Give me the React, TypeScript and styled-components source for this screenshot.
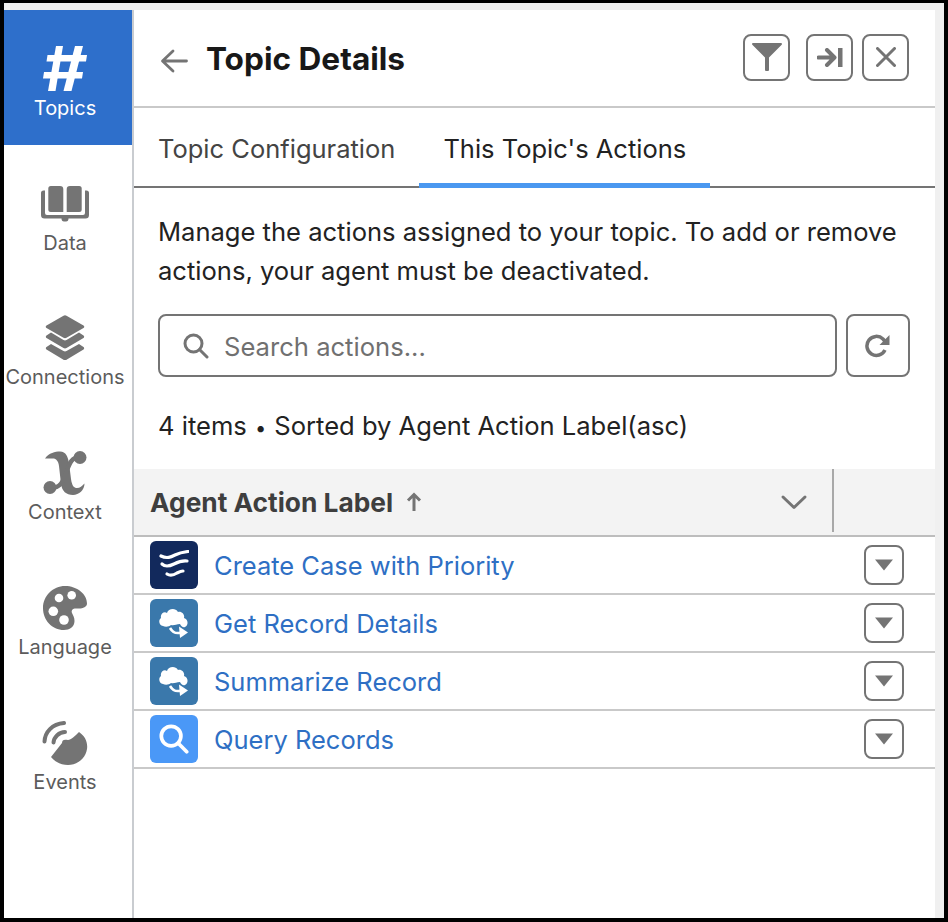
import React from 'react';
import styled, { createGlobalStyle } from 'styled-components';

const GlobalStyle = createGlobalStyle`
    html, body {
        margin: 0;
        padding: 0;
        background: #000;
    }
    * {
        box-sizing: border-box;
    }
`;

const ICON_GRAY = '#747474';
const LINK_BLUE = '#2e6fc4';

interface NavItemData {
    label: string;
    icon: JSX.Element;
}

const HashIcon = () => (
    <svg width="44" height="45" viewBox="0 0 44 45">
        <path d="M13 0 H20 L12.500 45 H5 Z" fill="#fff" />
        <path d="M32 0 H40 L28.500 45 H20.500 Z" fill="#fff" />
        <path d="M4.500 9 H44 L43 15.500 H3.500 Z" fill="#fff" />
        <path d="M1 26 H40 L39 32.500 H0 Z" fill="#fff" />
    </svg>
);

const BookIcon = () => (
    <svg width="48" height="40" viewBox="0 0 48 40" fill={ICON_GRAY}>
        <path d="M7.300 2.500 a2.500 2.500 0 0 1 2.500 -2.500 H19 a3.300 3.300 0 0 1 3.300 3.300 V26 H9.800 A2.500 2.500 0 0 1 7.300 23.500 Z" />
        <path d="M25.700 3.300 a3.300 3.300 0 0 1 3.300 -3.300 h9.200 a2.500 2.500 0 0 1 2.500 2.500 v21 a2.500 2.500 0 0 1 -2.500 2.500 H25.700 Z" />
        <path d="M0 7 a2.500 2.500 0 0 1 2.500 -2.500 H4 V27 a2 2 0 0 0 2 2 H42 a2 2 0 0 0 2 -2 V4.500 h1.500 A2.500 2.500 0 0 1 48 7 V29 a3.500 3.500 0 0 1 -3.500 3.500 H27.500 a2.500 3 0 0 1 -2.500 3 H23 a2.500 3 0 0 1 -2.500 -3 H3.500 A3.500 3.500 0 0 1 0 29 Z" />
    </svg>
);

const LayersIcon = () => (
    <svg width="40" height="45" viewBox="0 0 40 45" fill={ICON_GRAY}>
        <path d="M18.500 .7 a3 3 0 0 1 3 0 L38.500 10.500 a1.500 1.500 0 0 1 0 2.600 L21.500 22.800 a3 3 0 0 1 -3 0 L1.500 13.100 a1.500 1.500 0 0 1 0 -2.600 Z" />
        <path d="M6 17.500 L18.500 25 a3 3 0 0 0 3 0 L34 17.500 L38.500 20.500 a1.500 1.500 0 0 1 0 2.500 L21.500 33 a3 3 0 0 1 -3 0 L1.500 23 a1.500 1.500 0 0 1 0 -2.500 Z" />
        <path d="M6 29 L18.500 36 a3 3 0 0 0 3 0 L34 29 L38.500 32 a1.500 1.500 0 0 1 0 2.500 L21.500 44.800 a3 3 0 0 1 -3 0 L1.500 34.500 a1.500 1.500 0 0 1 0 -2.500 Z" />
    </svg>
);

const ContextIcon = () => (
    <svg width="44" height="44" viewBox="0 0 44 44" fill={ICON_GRAY}>
        <path d="M2 7.500 C6 2 12 .5 17 .5 C23 .5 25 6 26 12 L28 28 C29 35 31 37 34 37 C37 37 39 35 41.500 32.500 C41.500 39 36 44 30 44 C23 44 19 40 18 33 L16 15 C15.500 10 13 7.500 10 7.500 C7 7.500 4 7.500 2 7.500 Z" />
        <path d="M37 6 C28 6 26 14 23 22 C20 31 17 37 8 37" fill="none" stroke={ICON_GRAY} strokeWidth="4.500" />
        <circle cx="37" cy="6.500" r="6.500" />
        <circle cx="7" cy="36.500" r="6.500" />
    </svg>
);

const PaletteIcon = () => (
    <svg width="44" height="44" viewBox="0 0 44 44">
        <path
            fill={ICON_GRAY}
            d="M22 0 C34 0 44 8 44 17.500 C44 21 40 22.500 36 22.500 H33 C29.500 22.500 28 24.500 29 27 C30 29.500 31.500 31 31.500 35 C31.500 41 26.500 44 21 44 C9 44 0 34 0 22 C0 10 10 0 22 0 Z"
        />
        <circle cx="16" cy="12" r="4.300" fill="#fff" />
        <circle cx="28.700" cy="9.300" r="4.300" fill="#fff" />
        <circle cx="10.300" cy="25.300" r="4.800" fill="#fff" />
        <circle cx="21" cy="34" r="4.800" fill="#fff" />
    </svg>
);

const EventsIcon = () => (
    <svg width="46" height="44" viewBox="0 0 46 44" fill="none">
        <path
            fill={ICON_GRAY}
            d="M37 11 C43 15 46 21 45 28 C43.500 38 35 44 26 44 C19 44 13 41 9 36 L20 22 C20 19 22 18 26 19 C29 19 33 15 37 11 Z"
        />
        <path d="M2.500 20.500 C3 11 10 3 22 2" stroke={ICON_GRAY} strokeWidth="4" strokeLinecap="round" />
        <path d="M11.500 21.500 C12 16 17 11 23 11" stroke={ICON_GRAY} strokeWidth="4" strokeLinecap="round" />
    </svg>
);

const NAV_ITEMS: NavItemData[] = [
    { label: 'Topics', icon: <HashIcon /> },
    { label: 'Data', icon: <BookIcon /> },
    { label: 'Connections', icon: <LayersIcon /> },
    { label: 'Context', icon: <ContextIcon /> },
    { label: 'Language', icon: <PaletteIcon /> },
    { label: 'Events', icon: <EventsIcon /> },
];

const FilterIcon = () => (
    <svg width="30" height="28" viewBox="0 0 30 28" fill={ICON_GRAY}>
        <path d="M1 0 H29 a1 1 0 0 1 .7 1.700 L17 14.500 V27 a1 1 0 0 1 -1 1 H14 a1 1 0 0 1 -1 -1 V14.500 L.3 1.700 A1 1 0 0 1 1 0 Z" />
    </svg>
);

const CollapseIcon = () => (
    <svg width="26" height="19" viewBox="0 0 26 19" fill="none">
        <rect x="21" y="0" width="4.500" height="19" fill={ICON_GRAY} />
        <path d="M1.500 9.500 H17 M10 2 L17.500 9.500 L10 17" stroke={ICON_GRAY} strokeWidth="4" strokeLinecap="round" strokeLinejoin="round" />
    </svg>
);

const CloseIcon = () => (
    <svg width="20" height="20" viewBox="0 0 20 20" fill="none">
        <path d="M1.500 1.500 L18.500 18.500 M18.500 1.500 L1.500 18.500" stroke={ICON_GRAY} strokeWidth="3" strokeLinecap="round" />
    </svg>
);

const BackIcon = () => (
    <svg width="28" height="24" viewBox="0 0 28 24" fill="none">
        <path d="M3 12 H26.500 M13 2 L2.500 12 L13 22" stroke={ICON_GRAY} strokeWidth="2.800" strokeLinecap="round" strokeLinejoin="round" />
    </svg>
);

const SearchGlass = ({ color, size, width }: { color: string; size: number; width: number }) => (
    <svg width={size} height={size} viewBox="0 0 26 26" fill="none">
        <circle cx="10.500" cy="10.500" r="8.500" stroke={color} strokeWidth={width} />
        <path d="M16.500 16.500 L24 24" stroke={color} strokeWidth={width} strokeLinecap="round" />
    </svg>
);

const RefreshIcon = () => (
    <svg width="26" height="24" viewBox="0 0 26 24" fill="none">
        <path d="M20 16 A9.500 9.500 0 1 1 18 5 L21 8.500" stroke={ICON_GRAY} strokeWidth="3.500" />
        <path d="M24.500 1 V11 H14.500 Z" fill={ICON_GRAY} />
    </svg>
);

const FlowIcon = () => (
    <svg width="30" height="30" viewBox="0 0 30 30" fill="none" stroke="#fff" strokeWidth="3.200" strokeLinecap="round">
        <path d="M2 6 C8 9 12 7 16 5 C20 3 25 2 29 1.500" />
        <path d="M3 14 C6 17 11 16 15 14 C19 12 24 10.500 28 11" />
        <path d="M8 24 C11 26 15 25 18 23 C20 22 22 21 24 21" />
    </svg>
);

const CloudFlowIcon = () => (
    <svg width="32" height="30" viewBox="0 0 32 30" fill="none">
        <path
            fill="#fff"
            d="M5 18 C1 18 0 12 3 10 C2 6 6 3 9 5 C10 1 17 -1 20 4 C24 3 27 7 26 10 C30 11 31 17 27 19 C25 20 23 18 22 16 C18 16 16 18 13 17 C11 19 7 19 5 18 Z"
        />
        <path d="M12 20 C15 25 18 26 23 24.500" stroke="#fff" strokeWidth="2.600" fill="none" />
        <path d="M21 18.500 L30 24.500 L22 30 Z" fill="#fff" />
    </svg>
);

interface RowData {
    label: string;
    color: string;
    icon: JSX.Element;
}

const ROWS: RowData[] = [
    { label: 'Create Case with Priority', color: '#12295c', icon: <FlowIcon /> },
    { label: 'Get Record Details', color: '#3a78ab', icon: <CloudFlowIcon /> },
    { label: 'Summarize Record', color: '#3a78ab', icon: <CloudFlowIcon /> },
    { label: 'Query Records', color: '#4a98f7', icon: <SearchGlass color="#fff" size={30} width={3.2} /> },
];

export default function App() {
    return (
        <>
            <GlobalStyle />
            <Frame>
                <Window>
                    <Sidebar>
                        {NAV_ITEMS.map((item, i) => (
                            <NavItem key={item.label} active={i === 0}>
                                <NavIcon>{item.icon}</NavIcon>
                                <NavLabel>{item.label}</NavLabel>
                            </NavItem>
                        ))}
                    </Sidebar>
                    <Panel>
                        <Header>
                            <BackButton>
                                <BackIcon />
                            </BackButton>
                            <Title>Topic Details</Title>
                            <HeaderActions>
                                <SquareButton gap={0}>
                                    <FilterIcon />
                                </SquareButton>
                                <SquareButton gap={16}>
                                    <CollapseIcon />
                                </SquareButton>
                                <SquareButton gap={9}>
                                    <CloseIcon />
                                </SquareButton>
                            </HeaderActions>
                        </Header>
                        <Tabs>
                            <Tab>Topic Configuration</Tab>
                            <Tab active>This Topic's Actions</Tab>
                        </Tabs>
                        <Body>
                            <Description>
                                Manage the actions assigned to your topic. To add or remove actions, your agent must be
                                deactivated.
                            </Description>
                            <SearchRow>
                                <SearchBox>
                                    <SearchGlass color={ICON_GRAY} size={26} width={3} />
                                    <SearchText>Search actions...</SearchText>
                                </SearchBox>
                                <RefreshButton>
                                    <RefreshIcon />
                                </RefreshButton>
                            </SearchRow>
                            <Summary>
                                4 items <Dot>•</Dot> Sorted by Agent Action Label(asc)
                            </Summary>
                        </Body>
                        <TableHead>
                            <HeadLabel>
                                Agent Action Label
                                <svg width="16" height="20" viewBox="0 0 16 20" fill="none">
                                    <path d="M8 19 V3 M2 8.500 L8 2.500 L14 8.500" stroke={ICON_GRAY} strokeWidth="3" />
                                </svg>
                            </HeadLabel>
                            <svg width="28" height="16" viewBox="0 0 28 16" fill="none">
                                <path d="M3 3 L14 13.500 L25 3" stroke={ICON_GRAY} strokeWidth="3" strokeLinecap="round" strokeLinejoin="round" />
                            </svg>
                            <HeadDivider />
                        </TableHead>
                        {ROWS.map((row) => (
                            <Row key={row.label}>
                                <RowIcon color={row.color}>{row.icon}</RowIcon>
                                <RowLink>{row.label}</RowLink>
                                <RowMenu>
                                    <svg width="18" height="12" viewBox="0 0 18 12">
                                        <path d="M0 .5 H18 L9 11.500 Z" fill={ICON_GRAY} />
                                    </svg>
                                </RowMenu>
                            </Row>
                        ))}
                    </Panel>
                </Window>
            </Frame>
        </>
    );
}

const Frame = styled.div`
    width: 948px;
    height: 922px;
    padding: 3px 4px 4px 4px;
    background: #000;
    font-family: Inter, 'Liberation Sans', sans-serif;
`;

const Window = styled.div`
    width: 100%;
    height: 100%;
    padding: 7px 9px 0 0;
    background: #f0f0f0;
    display: flex;
`;

const Sidebar = styled.nav`
    width: 130px;
    flex: none;
    border-right: 2px solid #c9ccd0;
    background: #fff;
`;

const NavItem = styled.div<{ active?: boolean }>`
    height: 134.8px;
    display: flex;
    flex-direction: column;
    align-items: center;
    justify-content: flex-end;
    padding: 0 6px 25px 0;
    color: ${(props) => (props.active ? '#fff' : '#5c5c5c')};
    background: ${(props) => (props.active ? '#2e6fcb' : 'transparent')};
`;

const NavIcon = styled.div`
    height: 50px;
    display: flex;
    align-items: flex-end;
    justify-content: center;
    margin-bottom: 5px;
`;

const NavLabel = styled.span`
    font-size: 20px;
    line-height: 24px;
    white-space: nowrap;
`;

const Panel = styled.main`
    flex: 1;
    min-width: 0;
    background: #fff;
`;

const Header = styled.header`
    height: 98px;
    border-bottom: 2px solid #c9c9c9;
    display: flex;
    align-items: center;
    padding: 0 26px 0 26px;
`;

const BackButton = styled.div`
    display: flex;
    margin-top: 6px;
`;

const Title = styled.h1`
    margin: 1px 0 0 18px;
    font-size: 31.6px;
    line-height: 40px;
    font-weight: 700;
    color: #181818;
`;

const HeaderActions = styled.div`
    margin-left: auto;
    display: flex;
    margin-top: -2px;
`;

const SquareButton = styled.div<{ gap: number }>`
    width: 47px;
    height: 47px;
    margin-left: ${(props) => props.gap}px;
    border: 2px solid ${ICON_GRAY};
    border-radius: 8px;
    display: flex;
    align-items: center;
    justify-content: center;
`;

const Tabs = styled.div`
    height: 80px;
    border-bottom: 2px solid #747474;
    display: flex;
`;

const Tab = styled.div<{ active?: boolean }>`
    padding: 0 24px;
    font-size: 25.5px;
    line-height: 82px;
    height: 80px;
    color: ${(props) => (props.active ? '#222' : '#444')};
    border-bottom: ${(props) => (props.active ? '5px solid #4a98f0' : 'none')};
`;

const Body = styled.section`
    padding: 24px 25px 0 24px;
`;

const Description = styled.p`
    margin: 0;
    font-size: 25.55px;
    line-height: 39px;
    color: #222;
`;

const SearchRow = styled.div`
    display: flex;
    gap: 9px;
    margin-top: 24px;
`;

const SearchBox = styled.div`
    flex: 1;
    height: 63px;
    border: 2px solid ${ICON_GRAY};
    border-radius: 8px;
    display: flex;
    align-items: center;
    padding-left: 23px;
`;

const SearchText = styled.span`
    margin-left: 15px;
    padding-top: 2px;
    font-size: 25.6px;
    color: #707070;
`;

const RefreshButton = styled.div`
    width: 64px;
    height: 63px;
    flex: none;
    border: 2px solid ${ICON_GRAY};
    border-radius: 8px;
    display: flex;
    align-items: center;
    justify-content: center;
`;

const Summary = styled.div`
    margin-top: 29px;
    font-size: 25.55px;
    line-height: 40px;
    color: #222;
`;

const Dot = styled.span`
    font-size: 20px;
    margin: 0 1px;
`;

const TableHead = styled.div`
    height: 68px;
    margin-top: 21px;
    background: #f3f3f3;
    border-bottom: 2px solid #bdbdbd;
    display: flex;
    align-items: center;
    padding: 0 0 0 16px;
`;

const HeadLabel = styled.div`
    flex: 1;
    display: flex;
    align-items: center;
    gap: 13px;
    font-size: 26.3px;
    font-weight: 700;
    color: #3e3e3e;
`;

const HeadDivider = styled.div`
    width: 2px;
    height: 63px;
    align-self: flex-start;
    margin-left: 24px;
    margin-right: 101px;
    background: #a8a8a8;
`;

const Row = styled.div`
    height: 58px;
    border-bottom: 2px solid #c9c9c9;
    display: flex;
    align-items: center;
    padding: 0 31px 0 16px;
`;

const RowIcon = styled.div<{ color: string }>`
    width: 48px;
    height: 48px;
    border-radius: 6px;
    background: ${(props) => props.color};
    display: flex;
    align-items: center;
    justify-content: center;
    flex: none;
`;

const RowLink = styled.a`
    flex: 1;
    margin-left: 16px;
    font-size: 25.5px;
    color: ${LINK_BLUE};
`;

const RowMenu = styled.div`
    width: 40px;
    height: 40px;
    border: 2px solid ${ICON_GRAY};
    border-radius: 8px;
    display: flex;
    align-items: center;
    justify-content: center;
`;
